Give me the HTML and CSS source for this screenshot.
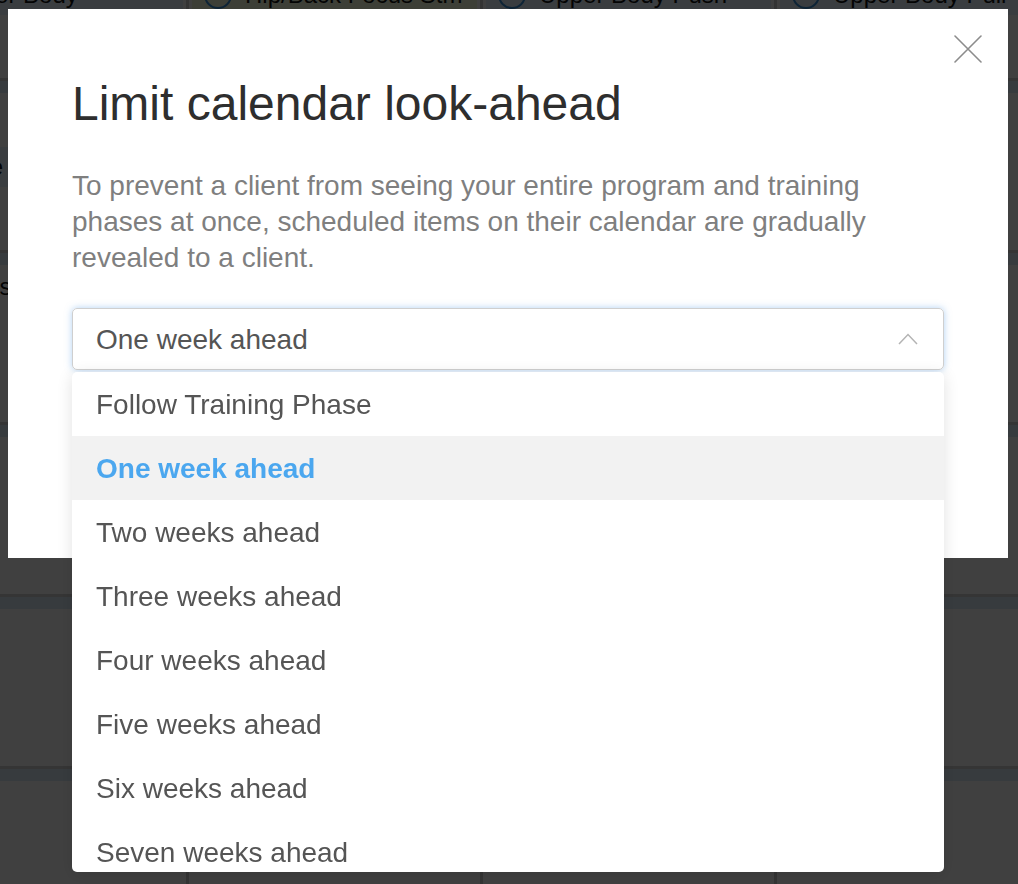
FILE: index.html
```html
<!DOCTYPE html>
<html lang="en">
<head>
<meta charset="utf-8">
<title>Limit calendar look-ahead</title>
<link rel="stylesheet" href="styles.css">
</head>
<body>
<div class="calendar">
  <div class="week week-cards">
    <div class="day"><div class="day-head"></div><div class="day-body"><div class="event event-blue"><span class="ring"></span><span class="ev-text">Upper Body</span></div></div></div>
    <div class="day"><div class="day-head"></div><div class="day-body"><div class="event event-green"><span class="ring"></span><span class="ev-text">Hip/Back Focus Stm</span></div></div></div>
    <div class="day"><div class="day-head"></div><div class="day-body"><div class="event event-blue"><span class="ring"></span><span class="ev-text">Upper Body Push</span></div></div></div>
    <div class="day"><div class="day-head"></div><div class="day-body"><div class="event event-blue"><span class="ring"></span><span class="ev-text">Upper Body Pull</span></div></div></div>
  </div>
  <div class="week week-cards">
    <div class="day"><div class="day-head"></div><div class="day-body"><div class="event event-blue"><span class="ring"></span><span class="ev-text">Core</span></div></div></div>
    <div class="day"><div class="day-head"></div><div class="day-body"></div></div>
    <div class="day"><div class="day-head"></div><div class="day-body"></div></div>
    <div class="day"><div class="day-head"></div><div class="day-body"></div></div>
  </div>
  <div class="week week-compact">
    <div class="day"><div class="day-head"></div><div class="day-body"><div class="event-plain">Stretches</div></div></div>
    <div class="day"><div class="day-head"></div><div class="day-body"></div></div>
    <div class="day"><div class="day-head"></div><div class="day-body"></div></div>
    <div class="day"><div class="day-head"></div><div class="day-body"></div></div>
  </div>
  <div class="week">
    <div class="day"><div class="day-head"></div></div>
    <div class="day"><div class="day-head"></div></div>
    <div class="day"><div class="day-head"></div></div>
    <div class="day"><div class="day-head"></div></div>
  </div>
  <div class="week">
    <div class="day"><div class="day-head"></div></div>
    <div class="day"><div class="day-head"></div></div>
    <div class="day"><div class="day-head"></div></div>
    <div class="day"><div class="day-head"></div></div>
  </div>
  <div class="week">
    <div class="day"><div class="day-head"></div></div>
    <div class="day"><div class="day-head"></div></div>
    <div class="day"><div class="day-head"></div></div>
    <div class="day"><div class="day-head"></div></div>
  </div>
</div>

<div class="backdrop"></div>

<div class="modal" role="dialog" aria-labelledby="modal-title">
  <button class="close" type="button" aria-label="Close">
    <svg viewBox="0 0 28 28" width="28" height="28" aria-hidden="true">
      <path d="M1 1 L27 27 M27 1 L1 27" fill="none" stroke="#8c8c8c" stroke-width="1.6" stroke-linecap="round"/>
    </svg>
  </button>
  <h2 class="title" id="modal-title">Limit calendar look-ahead</h2>
  <p class="desc">To prevent a client from seeing your entire program and training phases at once, scheduled items on their calendar are gradually revealed to a client.</p>
  <div class="select">
    <div class="select-box">
      <span class="select-value">One week ahead</span>
      <svg class="chevron" viewBox="0 0 20 12" width="20" height="12" aria-hidden="true">
        <path d="M1 11 L10 1.5 L19 11" fill="none" stroke="#b4b4b4" stroke-width="1.5"/>
      </svg>
    </div>
    <ul class="menu">
      <li>Follow Training Phase</li>
      <li class="active">One week ahead</li>
      <li>Two weeks ahead</li>
      <li>Three weeks ahead</li>
      <li>Four weeks ahead</li>
      <li>Five weeks ahead</li>
      <li>Six weeks ahead</li>
      <li>Seven weeks ahead</li>
      <li>Eight weeks ahead</li>
    </ul>
  </div>
</div>
</body>
</html>
```

FILE: styles.css
```css
* {
  box-sizing: border-box;
}

html,
body {
  margin: 0;
  height: 100%;
  overflow: hidden;
}

body {
  font-family: "Liberation Sans", Arial, Helvetica, sans-serif;
  background: #ffffff;
}

/* ---------- background calendar ---------- */
.calendar {
  width: 1200px;
  margin-left: -108px;
  margin-top: -94px;
}

.week {
  display: grid;
  grid-template-columns: repeat(4, 294px);
  height: 172px;
  border-top: 3px solid #d2d2d2;
}

.day {
  display: flex;
  flex-direction: column;
  border-left: 3px solid #cdcdcd;
}

.day-head {
  height: 12px;
  background: #dbe9f6;
}

.day-body {
  display: flex;
  flex-direction: column;
  padding: 54px 3px 0;
}

.week-compact .day-body {
  padding-top: 8px;
}

.event {
  display: flex;
  align-items: center;
  gap: 13px;
  height: 40px;
  padding: 0 12px;
  font-size: 24px;
  color: #111;
  white-space: nowrap;
  overflow: hidden;
}

.event-blue {
  background: #e6f3ff;
}

.event-green {
  background: #f1fbdc;
}

.ring {
  flex: none;
  width: 28px;
  height: 28px;
  border: 2px solid #3b8fd6;
  border-radius: 50%;
}

.event-plain {
  padding-left: 12px;
  font-size: 24px;
  line-height: 28px;
  color: #111;
  white-space: nowrap;
}

/* ---------- overlay ---------- */
.backdrop {
  position: fixed;
  inset: 0;
  background: rgba(0, 0, 0, 0.75);
}

.modal {
  position: fixed;
  left: 8px;
  top: 9px;
  width: 1000px;
  height: 549px;
  padding: 69px 64px 0;
  background: #ffffff;
}

.close {
  position: absolute;
  top: 26px;
  right: 26px;
  width: 28px;
  height: 28px;
  padding: 0;
  border: 0;
  background: none;
  display: flex;
}

.title {
  margin: 0;
  font-size: 48px;
  line-height: 1.1;
  font-weight: 400;
  color: #2e2e2e;
}

.desc {
  margin: 37px 0 0;
  font-size: 28px;
  line-height: 36px;
  color: #7f7f7f;
}

.select {
  position: relative;
  margin-top: 32px;
}

.select-box {
  display: flex;
  align-items: center;
  justify-content: space-between;
  height: 62px;
  padding: 2px 25px 0 23px;
  border: 1px solid #cfcfcf;
  border-radius: 5px;
  box-shadow: 0 0 7px rgba(102, 165, 233, 0.5);
  font-size: 28px;
  color: #555555;
}

.chevron {
  flex: none;
  margin-top: -2px;
}

.menu {
  position: absolute;
  top: calc(100% + 2px);
  left: 0;
  width: 872px;
  height: 500px;
  margin: 0;
  padding: 0;
  list-style: none;
  overflow: hidden;
  background: #ffffff;
  border-radius: 5px;
  box-shadow: 0 3px 16px rgba(0, 0, 0, 0.12);
}

.menu li {
  height: 64px;
  padding: 1px 24px 0;
  font-size: 28px;
  line-height: 63px;
  color: #555555;
}

.menu li.active {
  background: #f2f2f2;
  color: #4ba7ef;
  font-weight: 700;
}
```
